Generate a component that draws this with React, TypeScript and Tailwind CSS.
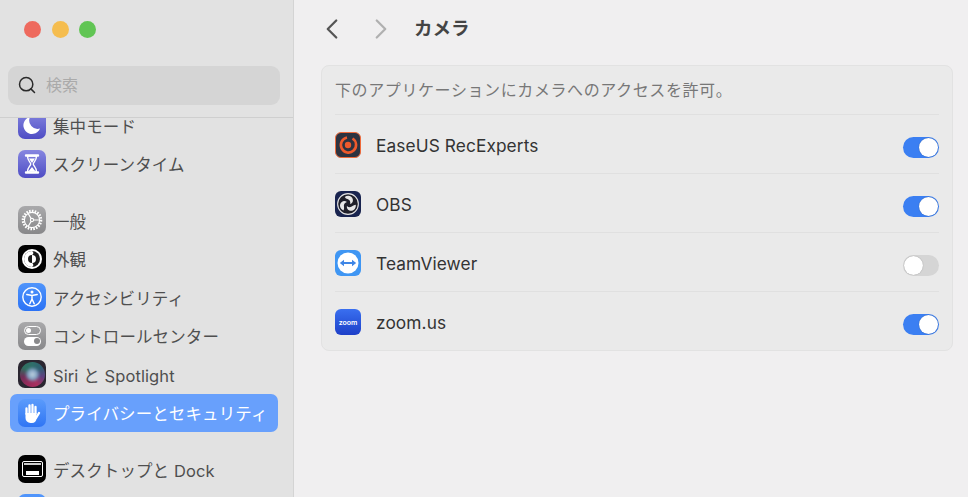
import React from 'react';
import { Search, ChevronLeft, ChevronRight } from 'lucide-react';

const FONT = 'font-["Inter","Noto_Sans_CJK_JP",sans-serif]';

function MoonIcon() {
  return (
    <div className="w-7 h-7 rounded-[7px] bg-gradient-to-b from-[#8786e0] to-[#4f4cc4] flex items-center justify-center shrink-0">
      <svg width="22" height="22" viewBox="0 0 22 22">
        <path d="M9 3a8.4 8.4 0 0 0 10 11.5A8.6 8.6 0 1 1 9 3z" fill="#fff" />
      </svg>
    </div>
  );
}

function HourglassIcon() {
  return (
    <div className="w-7 h-7 rounded-[7px] bg-gradient-to-b from-[#8786e0] to-[#4f4cc4] flex items-center justify-center shrink-0">
      <svg width="18" height="22" viewBox="0 0 18 22">
        <path d="M3 2.500h12M3 19.500h12" stroke="#fff" strokeWidth="2.400" strokeLinecap="round" />
        <path d="M4.500 3c0 5 3.200 6 3.200 8S4.500 14 4.500 19h9c0-5-3.200-6-3.200-8s3.200-3 3.200-8z" fill="none" stroke="#fff" strokeWidth="1.400" />
        <path d="M6 5.500h6L9 10zM5.800 18 9 14l3.200 4z" fill="#fff" />
      </svg>
    </div>
  );
}

function GearIcon() {
  return (
    <div className="w-7 h-7 rounded-[7px] bg-gradient-to-b from-[#a9a9ab] to-[#88888a] flex items-center justify-center shrink-0">
      <svg width="24" height="24" viewBox="0 0 24 24" fill="none" stroke="#fff">
        <circle cx="12" cy="12" r="9" strokeWidth="2.600" strokeDasharray="1.600 1.200" />
        <circle cx="12" cy="12" r="7.600" strokeWidth="1.100" />
        <circle cx="12" cy="12" r="1.600" strokeWidth="1.100" />
        <path d="M13.600 12H19.500M11.200 10.600 8.200 5.600M11.200 13.400l-3 5" strokeWidth="1.100" />
      </svg>
    </div>
  );
}

function AppearanceIcon() {
  return (
    <div className="w-7 h-7 rounded-[7px] bg-black flex items-center justify-center shrink-0">
      <svg width="22" height="22" viewBox="0 0 22 22">
        <circle cx="11" cy="11" r="10" fill="#fff" />
        <circle cx="11" cy="11" r="8" fill="#1a1a1a" />
        <path d="M11 3a8 8 0 0 0 0 16c2.400-1.400 1-3.400 0-4a4 4 0 0 1 0-8c1-.6 2.400-2.600 0-4z" fill="#fff" />
        <path d="M11 7a4 4 0 0 1 0 8z" fill="#fff" />
      </svg>
    </div>
  );
}

function AccessIcon() {
  return (
    <div className="w-7 h-7 rounded-[7px] bg-gradient-to-b from-[#4f94fb] to-[#2b72f5] flex items-center justify-center shrink-0">
      <svg width="22" height="22" viewBox="0 0 22 22" fill="none" stroke="#fff">
        <circle cx="11" cy="11" r="9.200" strokeWidth="1.400" />
        <circle cx="11" cy="6" r="1.500" fill="#fff" stroke="none" />
        <path d="M5.800 8.600 11 9.600l5.200-1M11 9.600v3.400M11 13l-2.200 4.800M11 13l2.200 4.800" strokeWidth="1.500" strokeLinecap="round" />
      </svg>
    </div>
  );
}

function ControlIcon() {
  return (
    <div className="w-7 h-7 rounded-[7px] bg-gradient-to-b from-[#a9a9ab] to-[#88888a] flex flex-col items-center justify-center gap-[2px] shrink-0">
      <div className="w-[17px] h-[9px] rounded-full border border-white flex items-center pl-[1px]">
        <div className="w-[5px] h-[5px] rounded-full bg-white" />
      </div>
      <div className="w-[17px] h-[9px] rounded-full bg-white flex items-center justify-end pr-[1px]">
        <div className="w-[6px] h-[6px] rounded-full bg-[#8a8a8c]" />
      </div>
    </div>
  );
}

function SiriIcon() {
  return (
    <div className="w-7 h-7 rounded-[7px] bg-[#2a2630] overflow-hidden shrink-0 flex items-center justify-center">
      <div className="w-[25px] h-[25px] rounded-full bg-[conic-gradient(#2f6f6a,#2f5f72,#5f3f7f,#a8305f,#982a5a,#6f2f58,#2f6f60,#2f6f6a)] flex items-center justify-center">
        <div className="w-[13px] h-[13px] rounded-full bg-[radial-gradient(circle,#c8d8e4_0%,#7fa0c0_50%,#5f6f98_100%)] blur-[1.5px]" />
      </div>
    </div>
  );
}

function HandIcon() {
  return (
    <div className="w-7 h-7 rounded-[7px] bg-gradient-to-b from-[#5b9bfb] to-[#2f75f4] flex items-center justify-center shrink-0">
      <svg width="22" height="22" viewBox="0 0 22 22" fill="none" stroke="#fff" strokeLinecap="round">
        <path d="M5.500 12V6.500M8.500 11V3.500M11.500 11V3M14.500 11.500V5" strokeWidth="2.300" />
        <path d="M4.500 11h11v5.500a4.500 4.500 0 0 1-4.500 4.500H9.500a5 5 0 0 1-5-5z" fill="#fff" stroke="none" />
        <path d="M15 16l3-5" strokeWidth="2.400" />
      </svg>
    </div>
  );
}

function DockIcon() {
  return (
    <div className="w-7 h-7 rounded-[7px] bg-black flex items-center justify-center shrink-0">
      <div className="w-[21px] h-[16px] rounded-[2px] border-[1.5px] border-white flex flex-col justify-between p-[1px]">
        <div className="h-[2px] bg-white/80" />
        <div className="h-[4px] mx-[2px] bg-white" />
      </div>
    </div>
  );
}

function SideRow({ icon, label, active = false }: { icon: React.ReactNode; label: string; active?: boolean }) {
  return (
    <div className={`w-[268px] h-[38.5px] flex items-center gap-[7px] pl-2 rounded-[7px] text-[16.5px] tracking-[0.1px] ${active ? 'bg-[#68a0fc] text-white' : 'text-[#4f4f4f]'}`}>
      {icon}
      <span className="whitespace-nowrap leading-none pt-[3px]">{label}</span>
    </div>
  );
}

function Toggle({ on }: { on: boolean }) {
  return (
    <div className={`w-9 h-[21px] mt-[6px] rounded-full flex items-center p-[1px] ${on ? 'bg-[#3b7ff2] justify-end' : 'bg-[#d5d5d5] justify-start'}`}>
      <div className="w-[19px] h-[19px] rounded-full bg-white shadow-[0_0_1px_rgba(0,0,0,0.4)]" />
    </div>
  );
}

function EaseUsIcon() {
  return (
    <div className="w-[26px] h-[26px] mt-[2px] rounded-[6px] bg-[#2d3340] border border-[#ef6a3a] flex items-center justify-center">
      <svg width="20" height="20" viewBox="0 0 20 20" fill="none">
        <path d="M14.500 3.500A7.600 7.600 0 1 1 9 2.500" stroke="#ee5a2c" strokeWidth="2.600" />
        <circle cx="10" cy="10" r="3.200" fill="#ee5a2c" />
      </svg>
    </div>
  );
}

function ObsIcon() {
  return (
    <div className="w-[26px] h-[26px] mt-[2px] rounded-[6px] bg-[#19244f] flex items-center justify-center">
      <svg width="24" height="24" viewBox="0 0 22 22">
        <circle cx="11" cy="11" r="9.500" fill="#20202a" stroke="#e4e4e4" strokeWidth="1" />
        <g fill="#e8e8e8">
          <path d="M8 4.500C10.500 2.500 15 3.200 15.500 7 15.800 9 14.500 10.500 13 11 13.500 9 12.500 7 10.500 6.500 9.500 6.200 8.700 5.500 8 4.500z" />
          <path d="M8 4.500C10.500 2.500 15 3.200 15.500 7 15.800 9 14.500 10.500 13 11 13.500 9 12.500 7 10.500 6.500 9.500 6.200 8.700 5.500 8 4.500z" transform="rotate(120 11 11)" />
          <path d="M8 4.500C10.500 2.500 15 3.200 15.500 7 15.800 9 14.500 10.500 13 11 13.500 9 12.500 7 10.500 6.500 9.500 6.200 8.700 5.500 8 4.500z" transform="rotate(240 11 11)" />
        </g>
      </svg>
    </div>
  );
}

function TeamViewerIcon() {
  return (
    <div className="w-[26px] h-[26px] mt-[2px] rounded-[6px] bg-[#3f96f3] flex items-center justify-center">
      <svg width="22" height="22" viewBox="0 0 22 22">
        <circle cx="11" cy="11" r="10.500" fill="#fff" />
        <path d="M2.800 11 7 7.800V10h8V7.800l4.200 3.200-4.200 3.200V12H7v2.200z" fill="#3f86e6" />
      </svg>
    </div>
  );
}

function ZoomIcon() {
  return (
    <div className="w-[26px] h-[26px] mt-[2px] rounded-[6px] bg-gradient-to-b from-[#3a6ff0] to-[#1e3fc8] flex items-center justify-center">
      <span className="text-white text-[7px] font-semibold leading-none">zoom</span>
    </div>
  );
}

function AppRow({ icon, name, on }: { icon: React.ReactNode; name: string; on: boolean }) {
  return (
    <div className="h-[59px] border-t border-[#e0e0e0] flex items-center justify-between">
      <div className="flex items-center gap-[15px]">
        {icon}
        <span className="text-[17.3px] tracking-[0.1px] text-[#333] pt-[4px]">{name}</span>
      </div>
      <Toggle on={on} />
    </div>
  );
}

export default function App() {
  return (
    <div className={`w-[968px] h-[497px] flex overflow-hidden bg-[#f0eff0] ${FONT}`}>
      {/* Sidebar */}
      <aside className="w-[294px] h-full bg-[#e2e2e2] border-r border-[#d4d4d4] flex flex-col shrink-0">
        <div className="h-[118px] border-b border-[#cfcfcf] shrink-0">
          <div className="flex gap-[10.500px] pl-[24px] pt-[20.500px]">
            <div className="w-[17px] h-[17px] rounded-full bg-[#ee6a5e]" />
            <div className="w-[17px] h-[17px] rounded-full bg-[#f5bd4f]" />
            <div className="w-[17px] h-[17px] rounded-full bg-[#61c554]" />
          </div>
          <div className="mx-2 mt-[28px] w-[272px] h-[39px] rounded-[9px] bg-[#d5d5d5] flex items-center pl-[9px] gap-[9px]">
            <Search size={20} color="#2a2a2a" strokeWidth={1.8} />
            <span className="text-[16px] text-[#aaaaaa]">検索</span>
          </div>
        </div>
        <div className="flex-1 overflow-hidden px-[10px]">
          <div className="-mt-[12px]">
            <SideRow icon={<MoonIcon />} label="集中モード" />
            <SideRow icon={<HourglassIcon />} label="スクリーンタイム" />
            <div className="h-[18px]" />
            <SideRow icon={<GearIcon />} label="一般" />
            <SideRow icon={<AppearanceIcon />} label="外観" />
            <SideRow icon={<AccessIcon />} label="アクセシビリティ" />
            <SideRow icon={<ControlIcon />} label="コントロールセンター" />
            <SideRow icon={<SiriIcon />} label="Siri と Spotlight" />
            <SideRow icon={<HandIcon />} label="プライバシーとセキュリティ" active />
            <div className="h-[18px]" />
            <SideRow icon={<DockIcon />} label="デスクトップと Dock" />
            <SideRow icon={<div className="w-7 h-7 rounded-[7px] bg-[#4f94fb] shrink-0" />} label="" />
          </div>
        </div>
      </aside>

      {/* Main */}
      <main className="flex-1 min-w-0">
        <div className="h-[65px] pb-[8px] flex items-center pl-[21px]">
          <ChevronLeft size={34} color="#555" strokeWidth={1.6} />
          <ChevronRight size={34} color="#b0b0b0" strokeWidth={1.6} className="ml-[15px]" />
          <h1 className="ml-[16px] text-[18.5px] font-bold text-[#444]">カメラ</h1>
        </div>
        <div className="ml-[27px] w-[632px] h-[286px] rounded-[8px] bg-[#eaeaea] border border-[#e2e2e2] px-[13px]">
          <div className="h-[48px] flex items-center text-[16px] tracking-[0.6px] text-[#777]">
            下のアプリケーションにカメラへのアクセスを許可。
          </div>
          <AppRow icon={<EaseUsIcon />} name="EaseUS RecExperts" on />
          <AppRow icon={<ObsIcon />} name="OBS" on />
          <AppRow icon={<TeamViewerIcon />} name="TeamViewer" on={false} />
          <AppRow icon={<ZoomIcon />} name="zoom.us" on />
        </div>
      </main>
    </div>
  );
}
